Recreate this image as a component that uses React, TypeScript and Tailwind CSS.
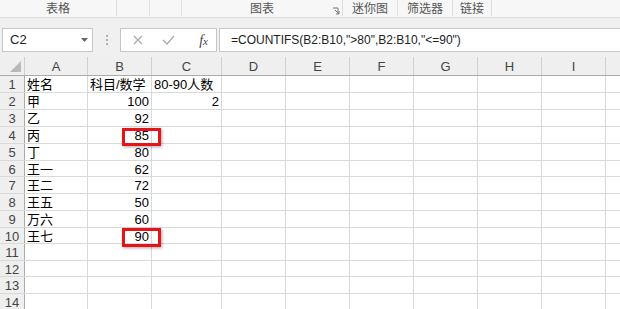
import React from 'react';

const font = "font-['Liberation_Sans','Noto_Sans_CJK_SC',sans-serif]";

// ribbon group label strip (only the bottom of the ribbon is visible)
const groups = [
  { w: 'w-[117px]', label: '表格' },
  { w: 'w-[33px]', label: '' },
  { w: 'w-[32px]', label: '' },
  { w: 'w-[161px]', label: '图表', launcher: true },
  { w: 'w-[55px]', label: '迷你图' },
  { w: 'w-[55px]', label: '筛选器' },
  { w: 'w-[39px]', label: '链接' },
];

const cols = [
  { key: 'A', w: 'w-[63px]' },
  { key: 'B', w: 'w-[64px]' },
  { key: 'C', w: 'w-[70px]' },
  { key: 'D', w: 'w-[64px]' },
  { key: 'E', w: 'w-[64px]' },
  { key: 'F', w: 'w-[64px]' },
  { key: 'G', w: 'w-[64px]' },
  { key: 'H', w: 'w-[64px]' },
  { key: 'I', w: 'w-[64px]' },
];

const rowHeights = ['h-[17px]', 'h-[17px]', 'h-[17px]', 'h-[17px]', 'h-[17px]', 'h-[16px]', 'h-[17px]', 'h-[17px]', 'h-[17px]', 'h-[16px]', 'h-[17px]', 'h-[16px]', 'h-[17px]', 'h-[16px]'];

const data: Record<number, { A?: string; B?: string; C?: string }> = {
  1: { A: '姓名', B: '科目/数学', C: '80-90人数' },
  2: { A: '甲', B: '100', C: '2' },
  3: { A: '乙', B: '92' },
  4: { A: '丙', B: '85' },
  5: { A: '丁', B: '80' },
  6: { A: '王一', B: '62' },
  7: { A: '王二', B: '72' },
  8: { A: '王五', B: '50' },
  9: { A: '万六', B: '60' },
  10: { A: '王七', B: '90' },
};

const isNum = (v?: string) => !!v && /^\d+$/.test(v);

function Cell({ w, value }: { w: string; value?: string }) {
  return (
    <div className={`${w} shrink-0 h-full border-r border-[#d9d9d9] flex items-center px-[2px] pt-[2px] overflow-visible whitespace-nowrap ${isNum(value) ? 'justify-end' : 'justify-start'}`}>
      {value}
    </div>
  );
}

export default function App() {
  return (
    <div className={`relative w-[620px] h-[309px] overflow-hidden bg-white ${font}`}>
      {/* ribbon group labels */}
      <div className="h-[18px] bg-[#f7f7f7] border-b border-[#dedede] flex text-[12px] text-[#555]">
        {groups.map((g, i) => (
          <div key={i} className={`${g.w} shrink-0 h-[16px] border-r border-[#dcdcdc] relative flex items-center justify-center pt-[1px]`}>
            {g.label}
            {g.launcher && (
              <svg className="absolute right-[2px] bottom-[1px]" width="8" height="8" viewBox="0 0 8 8">
                <path d="M1 1H6V6" fill="none" stroke="#777" strokeWidth="1" />
                <path d="M3 3L7 7M4 7H7V4" fill="none" stroke="#777" strokeWidth="1" />
              </svg>
            )}
          </div>
        ))}
      </div>

      {/* formula bar */}
      <div className="h-[39px] bg-[#f0f0f0] flex items-start pt-[10px] pl-[2px]">
        <div className="w-[91px] h-[24px] bg-white border border-[#c6c6c6] flex items-center justify-between pl-[7px] pr-[4px] text-[13px] text-[#222]">
          <span>C2</span>
          <svg width="7" height="4" viewBox="0 0 7 4">
            <path d="M0 0H7L3.5 4Z" fill="#666" />
          </svg>
        </div>
        <div className="w-[27px] h-[24px] flex flex-col items-center justify-center gap-[2px]">
          <span className="w-[2px] h-[2px] bg-[#b0b0b0]" />
          <span className="w-[2px] h-[2px] bg-[#b0b0b0]" />
          <span className="w-[2px] h-[2px] bg-[#b0b0b0]" />
        </div>
        <div className="w-[97px] h-[24px] bg-white border border-[#c6c6c6] flex items-center pl-[12px] pr-[8px]">
          <svg width="10" height="10" viewBox="0 0 10 10">
            <path d="M1 1L9 9M9 1L1 9" stroke="#a8a8a8" strokeWidth="1.2" />
          </svg>
          <svg className="ml-[19px]" width="13" height="10" viewBox="0 0 13 10">
            <path d="M1 5L5 9L12 1" fill="none" stroke="#a8a8a8" strokeWidth="1.2" />
          </svg>
          <span className="ml-auto font-['Liberation_Serif',serif] italic text-[14px] text-[#444]">
            f<span className="text-[11px]">x</span>
          </span>
        </div>
        <div className="ml-[2px] flex-1 h-[24px] bg-white border border-[#c6c6c6] border-r-0 flex items-center pl-[11px] text-[12px] text-[#222] whitespace-nowrap">
          =COUNTIFS(B2:B10,"&gt;80",B2:B10,"&lt;=90")
        </div>
      </div>

      {/* grid */}
      <div className="text-[13px] text-black">
        {/* column headers */}
        <div className="h-[19px] flex bg-[#efefef] border-b border-[#ababab] text-[#444]">
          <div className="w-[25px] shrink-0 h-full border-r border-[#cfcfcf] relative">
            <svg className="absolute right-[3px] bottom-[3px]" width="11" height="11" viewBox="0 0 11 11">
              <path d="M11 0V11H0Z" fill="#b9b9b9" />
            </svg>
          </div>
          {cols.map((c) => (
            <div key={c.key} className={`${c.w} shrink-0 h-full border-r border-[#cfcfcf] flex items-center justify-center pt-[2px]`}>
              {c.key}
            </div>
          ))}
          <div className="flex-1" />
        </div>

        {rowHeights.map((h, i) => {
          const r = i + 1;
          const d = data[r] ?? {};
          return (
            <div key={r} className={`${h} flex border-b border-[#d9d9d9]`}>
              <div className="w-[25px] shrink-0 h-full bg-[#efefef] border-r border-[#ababab] flex items-center justify-center pt-[2px] text-[#444]">
                {r}
              </div>
              <Cell w={cols[0].w} value={d.A} />
              <Cell w={cols[1].w} value={d.B} />
              <Cell w={cols[2].w} value={d.C} />
              {cols.slice(3).map((c) => (
                <Cell key={c.key} w={c.w} />
              ))}
              <div className="flex-1" />
            </div>
          );
        })}
      </div>

      {/* red highlight boxes */}
      <div className="absolute left-[122px] top-[128px] w-[39px] h-[18px] border-[3px] border-[#e5141b] shadow-[1px_1px_3px_rgba(0,0,0,0.35)]" />
      <div className="absolute left-[122px] top-[228px] w-[39px] h-[19px] border-[3px] border-[#e5141b] shadow-[1px_1px_3px_rgba(0,0,0,0.35)]" />
    </div>
  );
}
